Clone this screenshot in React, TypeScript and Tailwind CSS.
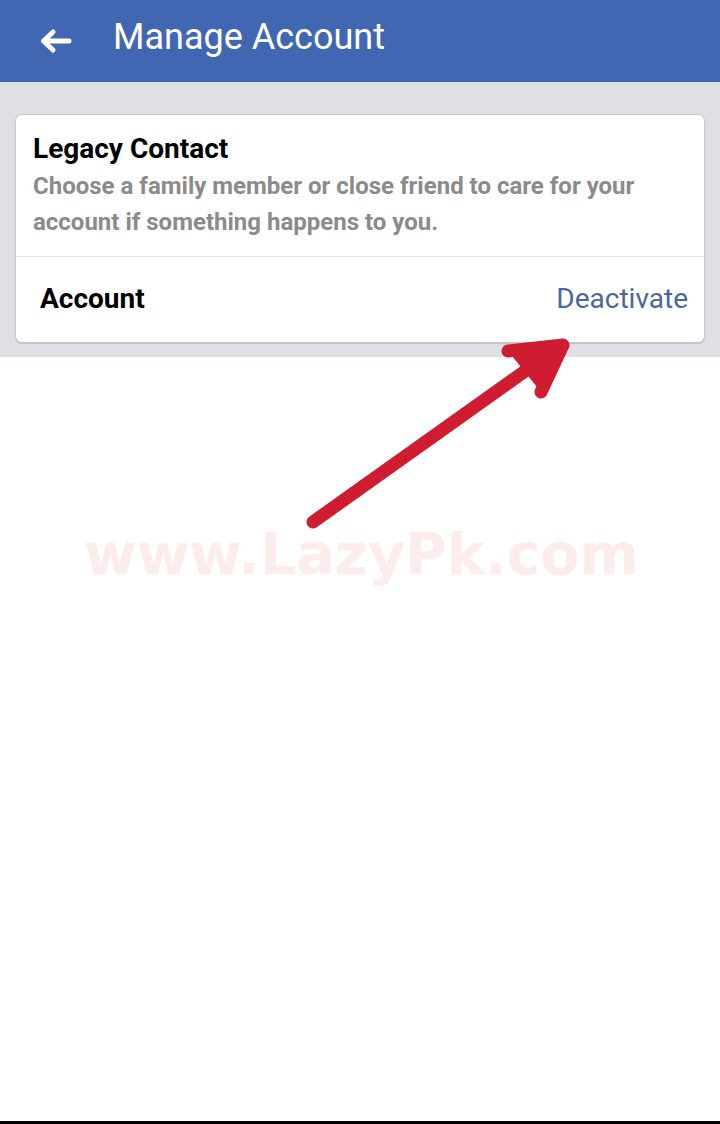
import React from 'react';

const App = () => {
  return (
    <div className="relative w-[720px] h-[1124px] bg-white overflow-hidden" style={{ fontFamily: 'Roboto, "Liberation Sans", sans-serif' }}>
      {/* Top bar */}
      <div className="h-[82px] bg-[#4267b2] flex items-center">
        <svg className="ml-[39px] w-[34px] h-[26px]" viewBox="0 0 34 26" fill="none">
          <path d="M30 13H5M14 4L4.5 13L14 22" stroke="white" strokeWidth="5" strokeLinecap="round" strokeLinejoin="round" />
        </svg>
        <h1 className="ml-[40px] text-[36px] text-white leading-none pb-[8px]">Manage Account</h1>
      </div>

      {/* Settings area */}
      <div className="bg-[#dfe0e4] pt-[32px] pb-[14px] px-[15px]">
        <div className="bg-white rounded-[7px] border border-[#c9cacd] shadow-[0_1px_1px_rgba(0,0,0,0.15)]">
          <div className="pl-[17px] pr-4 pt-[18px] pb-[16px] border-b border-[#e2e3e6]">
            <div className="text-[28px] font-bold text-black leading-[32px]">Legacy Contact</div>
            <p className="mt-[3px] text-[24px] font-bold text-[#8b8b8b] leading-[36px]">
              Choose a family member or close friend to care for your account if something happens to you.
            </p>
          </div>
          <div className="h-[85px] flex items-center justify-between pl-[24px] pr-[16px]">
            <span className="text-[28px] font-bold text-black pb-[2px]">Account</span>
            <span className="text-[28px] text-[#4b66a0] pb-[2px]">Deactivate</span>
          </div>
        </div>
      </div>

      {/* Watermark */}
      <div
        className="absolute left-[84px] top-[526px] text-[57px] font-black text-[#fcecec] leading-none select-none"
        style={{ fontFamily: '"DejaVu Sans", sans-serif' }}
      >
        www.LazyPk.com
      </div>

      {/* Annotation arrow */}
      <svg className="absolute left-0 top-0" width="720" height="1124" viewBox="0 0 720 1124">
        <path d="M313 522L556 349" stroke="#cf1c30" strokeWidth="13" strokeLinecap="round" />
        <path d="M508 351L563 345L541 392" stroke="#cf1c30" strokeWidth="13" strokeLinecap="round" strokeLinejoin="round" fill="none" />
        <path d="M508 351L563 345L541 392Z" fill="#cf1c30" />
      </svg>

      <div className="absolute left-0 bottom-0 w-full h-[3px] bg-black" />
    </div>
  );
};

export default App;
